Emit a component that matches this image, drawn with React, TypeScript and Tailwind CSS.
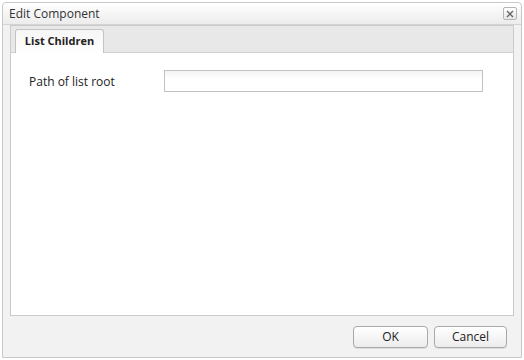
export default function App() {
  return (
    <div className="h-[360px] w-[524px] bg-white p-[2px] font-['Open_Sans','DejaVu_Sans',sans-serif] text-[12px] text-[#222]">
      <div className="flex h-[356px] flex-col rounded-t-[4px] border border-[#c8c8c8] bg-[#f2f2f2]">
        <div className="flex h-[22px] shrink-0 items-center justify-between rounded-t-[4px] border-b border-[#d3d3d3] bg-gradient-to-b from-white to-[#ececec] pl-[6px] pr-[4px]">
          <span className="text-[#333]">Edit Component</span>
          <button className="flex h-[13px] w-[14px] items-center justify-center rounded-[2px] border border-[#b5b5b5] bg-gradient-to-b from-white to-[#e6e6e6]">
            <svg width="8" height="8" viewBox="0 0 8 8" className="text-[#666]">
              <path d="M1 1L7 7M7 1L1 7" stroke="currentColor" strokeWidth="1.4" />
            </svg>
          </button>
        </div>
        <div className="flex flex-1 flex-col px-[7px]">
          <div className="flex h-[291px] flex-col border border-[#cbcbcb] bg-white">
            <div className="flex h-[27px] shrink-0 items-end border-b border-[#cfcfcf] bg-[#e8e8e8] pl-[4px]">
              <div className="-mb-px flex h-[24px] w-[89px] items-center justify-center rounded-t-[3px] border border-b-0 border-[#c4c4c4] bg-gradient-to-b from-[#f6f6f6] to-white text-[11px] font-bold text-[#222]">
                List Children
              </div>
            </div>
            <div className="flex items-center pl-[18px] pt-[17px]">
              <label className="w-[135px] pt-[2px]">Path of list root</label>
              <input className="h-[22px] w-[319px] border border-[#c2c2c2] bg-gradient-to-b from-[#f4f4f4] to-white to-40% outline-none" />
            </div>
          </div>
          <div className="flex flex-1 items-center justify-end gap-[6px] pr-[7px] pt-[1px]">
            <button className="h-[22px] w-[75px] rounded-[4px] border border-[#a9a9a9] bg-gradient-to-b from-white to-[#ececec] text-[#222] shadow-[0_1px_0_#ddd]">
              OK
            </button>
            <button className="h-[22px] w-[73px] rounded-[4px] border border-[#a9a9a9] bg-gradient-to-b from-white to-[#ececec] text-[#222] shadow-[0_1px_0_#ddd]">
              Cancel
            </button>
          </div>
        </div>
      </div>
    </div>
  );
}
